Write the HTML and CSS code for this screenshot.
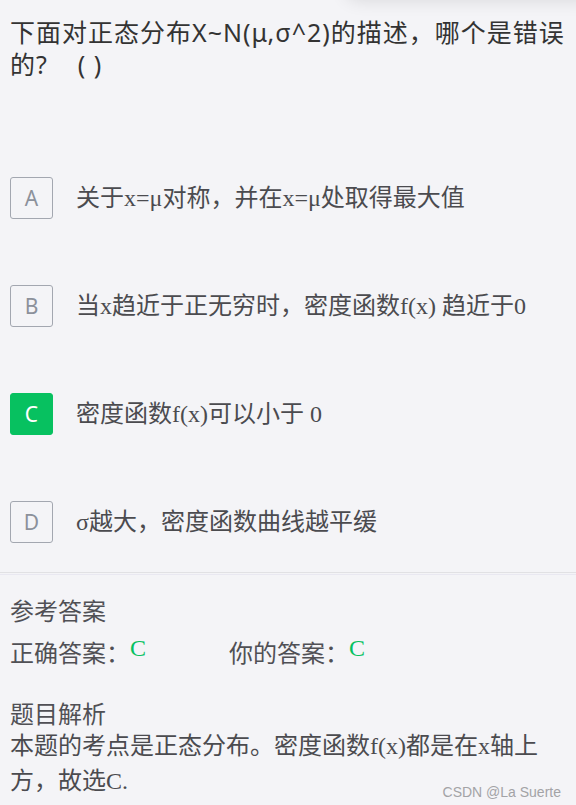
FILE: index.html
```html
<!DOCTYPE html>
<html lang="zh-CN">
<head>
<meta charset="utf-8">
<title>题目</title>
<link rel="stylesheet" href="styles.css">
</head>
<body>
<div class="topshade"></div>
<main class="page">
  <h1 class="question">下面对正态分布X~N(μ,σ^2)的描述，哪个是错误的?&nbsp;&nbsp;&nbsp;&nbsp;(&nbsp;)</h1>
  <ul class="options">
    <li class="option"><span class="key">A</span><span class="text">关于x=μ对称，并在x=μ处取得最大值</span></li>
    <li class="option"><span class="key">B</span><span class="text">当x趋近于正无穷时，密度函数f(x) 趋近于0</span></li>
    <li class="option"><span class="key key-right">C</span><span class="text">密度函数f(x)可以小于 0</span></li>
    <li class="option"><span class="key">D</span><span class="text">σ越大，密度函数曲线越平缓</span></li>
  </ul>
  <div class="divider"></div>
  <section class="answer">
    <div class="label">参考答案</div>
    <div class="answer-row">
      <span class="answer-item">正确答案：<span class="mark">C</span></span>
      <span class="answer-item">你的答案：<span class="mark">C</span></span>
    </div>
  </section>
  <section class="analysis">
    <div class="label label-analysis">题目解析</div>
    <p class="analysis-text"><span>本题的考点是正态分布。密度函数f(x)都是在x轴上方，故选C.</span></p>
  </section>
</main>
<div class="watermark">CSDN @La Suerte</div>
</body>
</html>
```

FILE: styles.css
```css
html, body {
  margin: 0;
  padding: 0;
}
body {
  background: #f4f4f7;
  width: 576px;
  height: 805px;
  overflow: hidden;
  position: relative;
  font-family: "Noto Sans", "Noto Sans CJK SC", sans-serif;
}
.topshade {
  position: absolute;
  top: -30px;
  right: -20px;
  width: 250px;
  height: 30px;
  border-radius: 12px;
  box-shadow: 0 0 18px rgba(0, 0, 0, 0.12);
}
.page {
  padding: 16px 10px 0 10px;
}
.question {
  margin: 0 -6px 0 0;
  font-size: 25px;
  font-weight: normal;
  line-height: 32px;
  letter-spacing: 1px;
  color: #333333;
}
.options {
  list-style: none;
  margin: 97px 0 0 0;
  padding: 0;
  display: flex;
  flex-direction: column;
  gap: 66px;
}
.option {
  display: flex;
  align-items: center;
  gap: 23px;
}
.key {
  box-sizing: border-box;
  width: 43px;
  height: 42px;
  flex: none;
  border: 1px solid #a3a7b0;
  border-radius: 3px;
  display: flex;
  align-items: center;
  justify-content: center;
  font-family: "Noto Sans", sans-serif;
  font-size: 21px;
  color: #8c919b;
}
.key-right {
  background: #07c160;
  border-color: #07c160;
  color: #ffffff;
}
.text {
  font-family: "Liberation Serif", "Noto Sans CJK SC", serif;
  font-size: 24px;
  color: #4b4b4f;
  line-height: 30px;
}
.divider {
  margin-top: 29px;
  margin-left: -10px;
  margin-right: -10px;
  border-top: 1px solid #e1e1e4;
  border-bottom: 1px solid #e9e8f1;
  box-sizing: border-box;
  height: 3px;
}
.answer {
  padding-top: 16px;
}
.label {
  font-family: "Noto Sans CJK SC", sans-serif;
  font-size: 24px;
  line-height: 38px;
  color: #505055;
}
.answer-row {
  display: flex;
  font-family: "Noto Sans CJK SC", sans-serif;
  font-size: 24px;
  line-height: 38px;
  color: #505055;
}
.answer-item:first-child {
  width: 219px;
}
.mark {
  font-family: "Liberation Serif", serif;
  font-size: 24px;
  color: #07c160;
  vertical-align: 6px;
}
.analysis {
  margin-top: 25px;
}
.label-analysis {
  line-height: 33px;
}
.analysis-text {
  margin: 0;
  padding-right: 14px;
  font-family: "Liberation Serif", "Noto Sans CJK SC", serif;
  font-size: 24px;
  line-height: 35px;
  color: #4b4b4f;
}
.watermark {
  position: absolute;
  right: 15px;
  bottom: 5px;
  font-family: "Liberation Sans", Arial, sans-serif;
  font-size: 14px;
  color: #a3a3a6;
}
```
